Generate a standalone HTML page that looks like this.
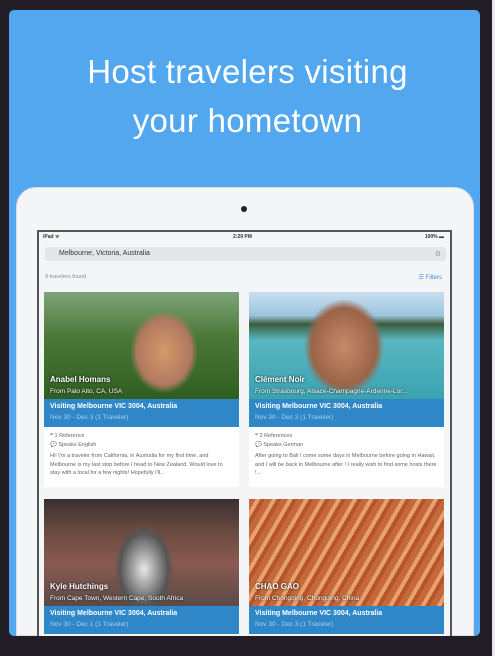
<!DOCTYPE html>
<html><head><meta charset="utf-8"><style>
*{margin:0;padding:0;box-sizing:border-box}
body{width:495px;height:656px;background:#221d27;position:relative;overflow:hidden;font-family:"Liberation Sans",sans-serif}
.edge{position:absolute;left:492px;top:0;width:3px;height:656px;background:#e8e8ea}
.panel{position:absolute;left:9px;top:10px;width:471px;height:626px;background:#52a7ef;border-radius:5px;overflow:hidden}
.t{position:absolute;left:0;width:495px;text-align:center;color:#fff;font-size:33px;font-weight:300;letter-spacing:0.3px}
.ipad{position:absolute;left:16px;top:187px;width:458px;height:449px;background:#f3f5f7;border-radius:20px 20px 0 0;border:1px solid #d9dde2}
.cam{position:absolute;left:241px;top:206px;width:6px;height:6px;border-radius:50%;background:#222}
.screen{position:absolute;left:37px;top:230px;width:415px;height:406px;background:#f4f5f6;border:2px solid #555;border-bottom:none;overflow:hidden}
.sb{position:absolute;top:2px;font-size:5px;color:#333;font-weight:bold}
.search{position:absolute;left:6px;top:15px;width:401px;height:14px;background:#e4e7ea;border-radius:2px;font-size:7px;color:#333;padding:3px 0 0 14px}
.found{position:absolute;left:6px;top:42px;font-size:5.5px;color:#888}
.filt{position:absolute;right:8px;top:42px;font-size:6px;color:#3c8ed6}
.card{position:absolute;width:195px;background:#fff}
.img{height:107px;position:relative}
.nm{position:absolute;left:6px;bottom:15px;color:#fff;font-size:8px;font-weight:bold;text-shadow:0 0 2px #000}
.fr{position:absolute;left:6px;bottom:4px;color:#fff;font-size:6.5px;text-shadow:0 0 2px #000;white-space:nowrap}
.band{background:#2f87c8;height:28px;padding:4px 6px;color:#fff}
.band b{display:block;font-size:7px}
.band span{display:block;font-size:6.5px;color:#a9d0ee;margin-top:4px}
.det{padding:5px 6px;font-size:5.5px;color:#666;line-height:8.5px;height:60px}
</style></head><body>
<div class="edge"></div>
<div class="panel"></div>
<div class="t" style="top:53px">Host travelers visiting</div>
<div class="t" style="top:102px">your hometown</div>
<div class="ipad"></div>
<div class="cam"></div>
<div class="screen">
 <div class="sb" style="left:4px">iPad ᯤ</div>
 <div class="sb" style="left:194px">2:29 PM</div>
 <div class="sb" style="right:6px">100% ▬</div>
 <div class="search">Melbourne, Victoria, Australia<span style="position:absolute;right:5px;top:3px;color:#999">⚙</span></div>
 <div class="found">9 travelers found</div>
 <div class="filt">☰ Filters</div>
 <div class="card" style="left:5px;top:60px">
  <div class="img" style="background:linear-gradient(90deg,rgba(0,0,0,0) 40%,rgba(0,0,0,0) 100%),radial-gradient(ellipse 45px 55px at 120px 60px,#d39a6a,#b07960 60%,transparent 75%),linear-gradient(180deg,#7ea47a 0%,#4d7a3a 40%,#2f5e22 100%)">
   <div class="nm">Anabel Homans</div><div class="fr">From Palo Alto, CA, USA</div></div>
  <div class="band"><b>Visiting Melbourne VIC 3004, Australia</b><span>Nov 30 - Dec 3 (1 Traveler)</span></div>
  <div class="det">❝ 1 Reference<br>💬 Speaks English<br><span style="display:block;margin-top:3px">Hi! I'm a traveler from California, in Australia for my first time, and Melbourne is my last stop before I head to New Zealand. Would love to stay with a local for a few nights! Hopefully I'll...</span></div>
 </div>
 <div class="card" style="left:210px;top:60px">
  <div class="img" style="background:radial-gradient(ellipse 50px 60px at 95px 55px,#c88a6a,#9a6448 65%,transparent 80%),linear-gradient(180deg,#c9dff0 0%,#9cc5de 22%,#3c5c3c 30%,#59b7c0 45%,#3aa2b0 100%)">
   <div class="nm">Clément Noir</div><div class="fr">From Strasbourg, Alsace-Champagne-Ardenne-Lor...</div></div>
  <div class="band"><b>Visiting Melbourne VIC 3004, Australia</b><span>Nov 30 - Dec 3 (1 Traveler)</span></div>
  <div class="det">❝ 2 References<br>💬 Speaks German<br><span style="display:block;margin-top:3px">After going to Bali I come some days in Melbourne before going in Hawaii, and I will be back in Melbourne after ! I really wish to find some hosts there !...</span></div>
 </div>
 <div class="card" style="left:5px;top:267px">
  <div class="img" style="background:radial-gradient(ellipse 40px 60px at 100px 70px,#e8e8e8,#555 60%,transparent 75%),linear-gradient(180deg,#3a3030 0%,#6a4a40 30%,#8a5a50 60%,#5a4a48 100%)">
   <div class="nm">Kyle Hutchings</div><div class="fr">From Cape Town, Western Cape, South Africa</div></div>
  <div class="band"><b>Visiting Melbourne VIC 3004, Australia</b><span>Nov 30 - Dec 1 (1 Traveler)</span></div>
 </div>
 <div class="card" style="left:210px;top:267px">
  <div class="img" style="background:repeating-linear-gradient(120deg,#c46a3a 0 6px,#e8a070 6px 10px,#b5552a 10px 14px),#c66a3a">
   <div class="nm">CHAO GAO</div><div class="fr">From Chongqing, Chongqing, China</div></div>
  <div class="band"><b>Visiting Melbourne VIC 3004, Australia</b><span>Nov 30 - Dec 3 (1 Traveler)</span></div>
 </div>
</div>
</body></html>
